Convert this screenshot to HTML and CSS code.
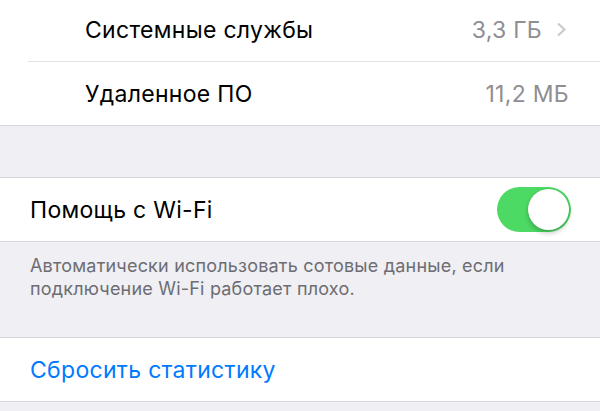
FILE: index.html
```html
<!DOCTYPE html>
<html lang="ru">
<head>
  <meta charset="UTF-8"/>
  <meta name="viewport" content="width=device-width,initial-scale=1.0"/>
  <title>Сотовые данные</title>
  <link rel="stylesheet" href="styles.css">
</head>
<body>
  <div class="group group-top">
    <div class="row row-sub">
      <span class="label">Системные службы</span>
      <span class="value">3,3 ГБ</span>
      <svg class="chevron" width="11" height="15" viewBox="0 0 11 15"><path d="M2 1.5 L8.5 7.5 L2 13.5" fill="none" stroke="#c7c7cc" stroke-width="2"/></svg>
    </div>
    <div class="row row-sub">
      <span class="label">Удаленное ПО</span>
      <span class="value">11,2 МБ</span>
    </div>
  </div>

  <div class="group group-wifi">
    <div class="row">
      <span class="label">Помощь с Wi-Fi</span>
      <span class="switch on"></span>
    </div>
  </div>
  <p class="footer">Автоматически использовать сотовые данные, если<br>подключение Wi-Fi работает плохо.</p>

  <div class="group">
    <div class="row">
      <span class="label link">Сбросить статистику</span>
    </div>
  </div>
</body>
</html>
```

FILE: styles.css
```css
body { margin:0; background:#efeff4; font-family:Inter, "Liberation Sans", sans-serif; color:#000; }
.group { background:#fff; border-top:1px solid #d8d8dc; border-bottom:1px solid #d8d8dc; }
.group-top { margin-top:-3px; }
.group-wifi { margin-top:51px; }
.row { height:63px; display:flex; align-items:center; padding:0 31px 0 30px; }
.row-sub { margin-left:28px; padding-left:57px; }
.row + .row { border-top:1px solid #e3e3e6; }
.label { flex:1; font-size:23px; letter-spacing:0.3px; }
.value { font-size:23px; color:#8e8e93; letter-spacing:0.3px; }
.chevron { margin-left:14px; margin-right:2px; }
.link { color:#007aff; }
.switch { width:74px; height:45px; border-radius:23px; background:#4cd964; position:relative; margin-right:-2px; }
.switch::after { content:""; position:absolute; right:2px; top:2px; width:41px; height:41px; border-radius:50%; background:#fff; box-shadow:0 3px 5px rgba(0,0,0,0.22), 0 0 0 0.5px rgba(0,0,0,0.06); }
.footer { margin:0; padding:12px 30px 37px; font-size:18px; line-height:23px; color:#6d6d72; letter-spacing:0.2px; }
```
